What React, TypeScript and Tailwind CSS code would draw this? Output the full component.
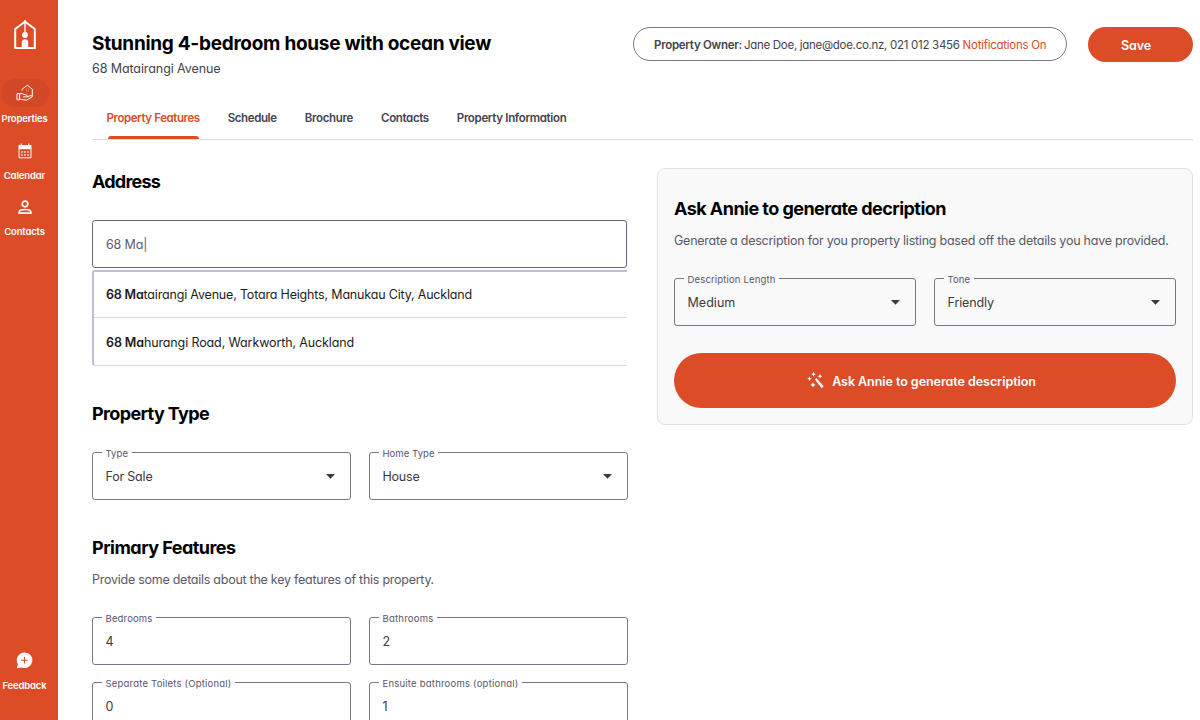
import { ReactNode } from "react";

function LogoIcon() {
  return (
    <svg width="22" height="30" viewBox="0 0 22 30" fill="none">
      <path d="M1.200 9 11 1.800 20.800 9V28H1.200z" stroke="#fff" strokeWidth="2" />
      <path d="M11 0v13" stroke="#fff" strokeWidth="1.400" />
      <circle cx="11" cy="15" r="2.900" fill="#fff" />
      <path d="M7.800 28.500V22.500a3.200 3.200 0 0 1 6.400 0v6z" fill="#fff" />
    </svg>
  );
}

function PropertiesIcon() {
  return (
    <svg width="18" height="18" viewBox="0 0 18 18" fill="none" stroke="#fff" strokeWidth="1" strokeLinejoin="round">
      <path d="M6.200 6.600V5.200L11.300 1.200l5 4v7.300" />
      <path d="M1 9.600h2.600v6.200H1z" />
      <path d="M3.600 9.700h2.800l4.300 1.600c.9.400.8 1.600-.3 1.600H7.200M10.900 12.700l4-1.100c1.100-.2 1.800.9.900 1.500l-5.300 3.100-6.900-1.100" />
      <path d="M10.200 5.200h.8M11.900 5.200h.8M10.200 7h.8M11.900 7h.8" strokeWidth=".8" opacity=".6" />
    </svg>
  );
}

function CalendarIcon() {
  return (
    <svg width="14" height="16" viewBox="0 0 14 16" fill="none">
      <path d="M3.300.5v2M10.700.5v2" stroke="#fff" strokeWidth="1.300" />
      <path d="M.5 2h13v4.200H.5z" fill="#fff" />
      <path d="M1 6v8.800h12V6" stroke="#fff" strokeWidth="1" />
      <path d="M3.300 9h1.400M6.300 9h1.400M9.300 9h1.400M3.300 12h1.400M6.300 12h1.400M9.300 12h1.400" stroke="#fff" strokeWidth="1.300" />
    </svg>
  );
}

function PersonIcon() {
  return (
    <svg width="14" height="15" viewBox="0 0 14 15" fill="none" stroke="#fff" strokeWidth="1.700">
      <circle cx="7" cy="4" r="2.800" />
      <path d="M1.200 13.200v-1.300c0-1.500 3.300-2.400 5.800-2.400s5.800.9 5.800 2.400v1.300z" />
    </svg>
  );
}

function FeedbackIcon() {
  return (
    <svg width="17" height="17" viewBox="0 0 17 17">
      <path d="M8.700.4a7.800 7.800 0 1 1-2.900 15.100L.7 16.300l1.200-4.100A7.800 7.800 0 0 1 8.700.4z" fill="#fff" />
      <path d="M8.500 5v6.600M5.200 8.300h6.600" stroke="#dc4c27" strokeWidth="1.100" />
    </svg>
  );
}

function WandIcon() {
  return (
    <svg width="17" height="17" viewBox="0 0 17 17" fill="#fff">
      <path d="m7.900 7.500 1.500-1.500 7.200 8.300-1.900 1.900z" />
      <path d="m6.500 0 .8 1.400 1.400.8-1.400.8-.8 1.400-.8-1.400-1.400-.8 1.400-.8z" />
      <path d="m13 1.900.8 1.500 1.500.8-1.500.8-.8 1.500-.8-1.500-1.500-.8 1.500-.8z" />
      <path d="m2.500 4.500.8 1.400 1.400.8-1.400.8-.8 1.400-.8-1.400-1.400-.8 1.400-.8z" />
      <path d="m6 10.300.9 1.700 1.700.9-1.700.9-.9 1.700-.9-1.700-1.700-.9 1.700-.9z" />
    </svg>
  );
}

type FieldProps = {
  label: string;
  labelClass: string;
  value: string;
  valueClass?: string;
  select?: boolean;
  bg?: string;
};

function Field({ label, labelClass, value, valueClass = "", select, bg = "bg-white" }: FieldProps) {
  return (
    <div className="relative flex h-12 flex-1 items-center justify-between rounded-[3px] border border-[#79748a] pr-[15px] pl-[12.5px] text-[12.5px] text-[#3b3a42]">
      <span className={`absolute -top-[6px] left-[9px] px-[3.5px] text-[9.5px] leading-[14px] whitespace-nowrap text-[#5a556b] ${bg} ${labelClass}`}>
        {label}
      </span>
      <span className={`pt-[3px] whitespace-nowrap ${valueClass}`}>{value}</span>
      {select && (
        <svg width="9" height="5" viewBox="0 0 9 5" fill="#3b3a42">
          <path d="M0 0h9L4.500 4.800z" />
        </svg>
      )}
    </div>
  );
}

function Heading({ className, children }: { className: string; children: ReactNode }) {
  return <h2 className={`text-[18px] leading-6 font-bold whitespace-nowrap text-black ${className}`}>{children}</h2>;
}

export default function App() {
  return (
    <div className="flex h-[720px] w-[1200px] overflow-hidden bg-white font-['Inter',sans-serif] text-[#45434d] [font-feature-settings:'cv11']">
      <aside className="flex w-[58px] shrink-0 flex-col bg-[#dc4c27] pt-5 pr-[9px] text-[9.5px] leading-3 font-semibold text-white">
        <div className="flex flex-col items-center">
          <LogoIcon />
        </div>
        <nav className="mt-[29px] flex flex-1 flex-col items-center">
          <div className="flex h-[28px] w-12 items-center justify-center rounded-full bg-[#d04825]">
            <PropertiesIcon />
          </div>
          <span className="mt-[6px] tracking-[-0.17px]">Properties</span>
          <div className="mt-[18px]"><CalendarIcon /></div>
          <span className="mt-[11px] tracking-[-0.12px]">Calendar</span>
          <div className="mt-[18px]"><PersonIcon /></div>
          <span className="mt-[11px] tracking-[-0.16px]">Contacts</span>
          <div className="mt-auto"><FeedbackIcon /></div>
          <span className="mt-[11px] mb-[28px] tracking-[-0.15px]">Feedback</span>
        </nav>
      </aside>

      <main className="flex flex-1 flex-col pr-[7px] pl-[34px]">
        <header className="flex h-[106px] shrink-0 items-start pt-[27px]">
          <div className="flex-1">
            <h1 className="mt-[5px] text-[19px] leading-6 font-bold tracking-[-0.285px] whitespace-nowrap text-black">
              Stunning 4-bedroom house with ocean view
            </h1>
            <p className="mt-[3px] text-[12.5px] leading-5 tracking-[-0.09px]">68 Matairangi Avenue</p>
          </div>
          <div className="flex h-[34px] w-[434px] items-center rounded-full border border-[#7b7984] pt-[4px] pl-5 text-[11.5px] whitespace-nowrap">
            <span className="font-semibold tracking-[-0.27px]">Property Owner:</span>
            <span className="ml-[2px] tracking-[-0.29px]">Jane Doe, jane@doe.co.nz, 021 012 3456</span>
            <span className="ml-[3px] tracking-[-0.26px] text-[#dc4c27]">Notifications On</span>
          </div>
          <button className="ml-[21px] flex h-[35px] w-[105px] items-center justify-center rounded-full bg-[#dc4c27] pt-[3px] pr-[9px] text-[12.5px] font-semibold tracking-[-0.12px] text-white">
            Save
          </button>
        </header>

        <div className="flex h-[34px] shrink-0 gap-7 border-b border-[#dcdbe3] pl-[14.5px] text-[11.5px] leading-6 font-semibold whitespace-nowrap">
          <div className="relative tracking-[-0.42px] text-[#dc4c27]">
            Property Features
            <span className="absolute bottom-0 left-px h-[3px] w-[91px] rounded-t-full bg-[#dc4c27]" />
          </div>
          <div className="tracking-[-0.39px]">Schedule</div>
          <div className="tracking-[-0.3px]">Brochure</div>
          <div className="tracking-[-0.36px]">Contacts</div>
          <div className="tracking-[-0.33px]">Property Information</div>
        </div>

        <div className="flex items-start gap-[29px]">
          <div className="w-[536px] shrink-0 pt-[30px]">
            <Heading className="tracking-[-0.78px]">Address</Heading>
            <div className="mt-[26px] flex h-12 w-[535px] items-center rounded-[3px] border border-[#6a6480] pt-[3px] pl-[13px] text-[12.5px] tracking-[-0.14px] text-[#5f5b6e]">
              68 Ma|
            </div>
            <div className="mt-[2px] w-[535px] rounded-l-[3px] border-t-2 border-b border-l-2 border-t-[#c3bdcd] border-b-[#d8d7dc] border-l-[#c3bdcd] text-[12.5px] whitespace-nowrap text-[#1d1c20]">
              <div className="flex h-[46px] items-center border-b border-[#d8d7dc] pt-[2px] pl-3 tracking-[-0.18px]">
                <b className="font-semibold">68 Ma</b>tairangi Avenue, Totara Heights, Manukau City, Auckland
              </div>
              <div className="flex h-[47px] items-center pt-[3px] pl-3 tracking-[-0.12px]">
                <b className="font-semibold">68 Ma</b>hurangi Road, Warkworth, Auckland
              </div>
            </div>

            <Heading className="mt-[36px] tracking-[-0.63px]">Property Type</Heading>
            <div className="mt-[26px] flex gap-[18px]">
              <Field label="Type" labelClass="tracking-[0.066px]" value="For Sale" valueClass="tracking-[-0.2px]" select />
              <Field label="Home Type" labelClass="tracking-[0.052px]" value="House" valueClass="tracking-[-0.22px]" select />
            </div>

            <Heading className="mt-[36px] tracking-[-0.53px]">Primary Features</Heading>
            <p className="mt-[10px] text-[12.5px] leading-5 tracking-[-0.26px] whitespace-nowrap text-[#5a5768]">
              Provide some details about the key features of this property.
            </p>
            <div className="mt-[27px] flex gap-[18px]">
              <Field label="Bedrooms" labelClass="tracking-[0.16px]" value="4" />
              <Field label="Bathrooms" labelClass="tracking-[0.233px]" value="2" />
            </div>
            <div className="mt-[17px] flex gap-[18px]">
              <Field label="Separate Toilets (Optional)" labelClass="tracking-[0.203px]" value="0" />
              <Field label="Ensuite bathrooms (optional)" labelClass="tracking-[0.22px]" value="1" />
            </div>
          </div>

          <section className="mt-7 h-[257px] w-[536px] shrink-0 rounded-lg border border-[#e2e2e4] bg-[#f9f9f9] px-4 pt-[28px]">
            <Heading className="tracking-[-0.54px]">Ask Annie to generate decription</Heading>
            <p className="mt-[10px] text-[12.5px] leading-5 tracking-[-0.24px] whitespace-nowrap text-[#5a5768]">
              Generate a description for you property listing based off the details you have provided.
            </p>
            <div className="mt-[27px] flex gap-[18px]">
              <Field label="Description Length" labelClass="tracking-[0.158px]" value="Medium" valueClass="tracking-[0.03px]" select bg="bg-[#f9f9f9]" />
              <Field label="Tone" labelClass="tracking-[0.063px]" value="Friendly" valueClass="tracking-[-0.11px]" select bg="bg-[#f9f9f9]" />
            </div>
            <button className="mt-[27px] flex h-[55px] w-full items-center justify-center gap-2 rounded-full bg-[#dc4c27] pr-[7px] text-[12.5px] font-semibold tracking-[-0.05px] text-white">
              <WandIcon />
              <span className="pt-[3px]">Ask Annie to generate description</span>
            </button>
          </section>
        </div>
      </main>
    </div>
  );
}
